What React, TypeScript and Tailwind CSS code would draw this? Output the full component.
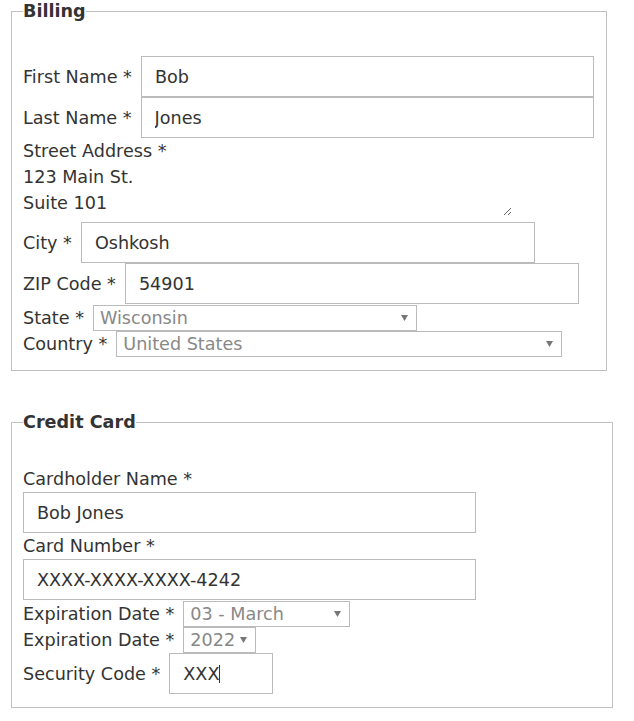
import type { ReactNode } from "react";

// Formularz płatności: dwa fieldsety, etykiety w linii z polami (Verdana-like, 1.1em)

const inputCls =
  "h-[41px] border border-[#bbb] bg-white px-[13px] text-[#333] outline-none";

function Row({ label, children, h = "h-[41px]" }: { label: string; children: ReactNode; h?: string }) {
  return (
    <div className={`flex items-center gap-[9px] ${h}`}>
      <label className="whitespace-nowrap">{label}</label>
      {children}
    </div>
  );
}

function Select({ value, w, pr = "pr-6" }: { value: string; w: string; pr?: string }) {
  return (
    <div className={`relative h-[26px] ${w}`}>
      <select
        defaultValue={value}
        className={`h-full w-full appearance-none border border-[#bbb] bg-white pl-[6px] leading-[24px] text-[#888] outline-none ${pr}`}
      >
        <option>{value}</option>
      </select>
      <svg
        className="pointer-events-none absolute right-[9px] top-[10px]"
        width="7"
        height="6"
        viewBox="0 0 7 6"
      >
        <path d="M0 0h7L3.5 6z" fill="#777" />
      </svg>
    </div>
  );
}

export default function App() {
  return (
    <div className="min-h-screen bg-white pl-[11px] font-['DejaVu_Sans',Verdana,sans-serif] text-[17.6px] leading-[26px] text-[#333]">
      <fieldset className="m-0 w-[596px] min-w-0 border border-[#c0c0c0] px-[11px] pt-[34px] pb-[13px]">
        <legend className="p-0 font-bold leading-[22px]">Billing</legend>

        <Row label="First Name *">
          <input className={`${inputCls} w-[453px]`} defaultValue="Bob" />
        </Row>
        <Row label="Last Name *">
          <input className={`${inputCls} w-[453px]`} defaultValue="Jones" />
        </Row>
        <div className="h-[26px]">
          <label>Street Address *</label>
        </div>
        <textarea
          className="mb-[6px] block h-[52px] w-[489px] border-0 p-0 leading-[26px] text-[#333] outline-none"
          defaultValue={"123 Main St.\nSuite 101"}
        />
        <Row label="City *">
          <input className={`${inputCls} w-[454px]`} defaultValue="Oshkosh" />
        </Row>
        <Row label="ZIP Code *">
          <input className={`${inputCls} w-[454px]`} defaultValue="54901" />
        </Row>
        <Row label="State *" h="h-[27px]">
          <Select value="Wisconsin" w="w-[324px]" />
        </Row>
        <Row label="Country *" h="h-[26px]">
          <Select value="United States" w="w-[446px]" />
        </Row>
      </fieldset>

      <fieldset className="m-0 mt-[40px] w-[602px] min-w-0 border border-[#c0c0c0] px-[11px] pt-[33px] pb-[13px]">
        <legend className="p-0 font-bold leading-[22px]">Credit Card</legend>

        <div className="h-[26px]">
          <label>Cardholder Name *</label>
        </div>
        <input className={`${inputCls} block w-[453px]`} defaultValue="Bob Jones" />
        <div className="h-[26px]">
          <label>Card Number *</label>
        </div>
        <input className={`${inputCls} block w-[453px]`} defaultValue="XXXX-XXXX-XXXX-4242" />
        <Row label="Expiration Date *" h="h-[27px]">
          <Select value="03 - March" w="w-[167px]" />
        </Row>
        <Row label="Expiration Date *" h="h-[26px]">
          <Select value="2022" w="w-[73px]" pr="pr-[14px]" />
        </Row>
        <Row label="Security Code *">
          <div className="relative">
            <input className={`${inputCls} w-[104px]`} defaultValue="XXX" />
            {/* kursor tekstowy, jak na zrzucie z fokusem */}
            <span className="pointer-events-none absolute left-[50px] top-[12px] h-[18px] w-px bg-[#333]" />
          </div>
        </Row>
      </fieldset>
    </div>
  );
}
